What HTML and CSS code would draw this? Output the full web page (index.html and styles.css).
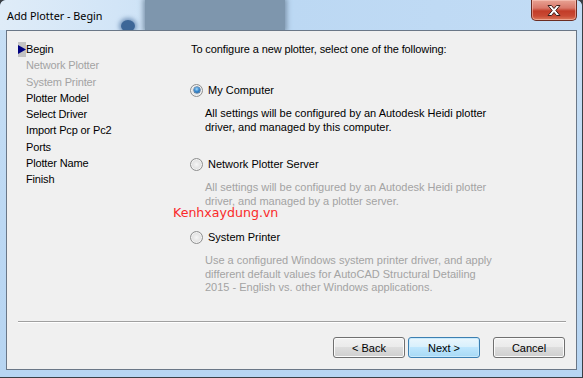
FILE: index.html
```html
<!DOCTYPE html>
<html>
<head>
<meta charset="utf-8">
<link rel="stylesheet" href="styles.css">
</head>
<body>
<div class="window">
  <div class="titlebar">
    <div class="glass-band"></div>
    <div class="glass-blob"></div>
    <span class="title">Add Plotter - Begin</span>
    <button class="close" aria-label="Close">
      <svg width="14" height="11" viewBox="0 0 14 11"><path d="M1 0.5h3.5L7 3.5 9.5 0.5H13L8.8 5.5 13 10.5H9.5L7 7.5 4.5 10.5H1L5.2 5.5Z" fill="#fff" stroke="#3b1f1a" stroke-width="1" stroke-linejoin="round"/></svg>
    </button>
  </div>
  <div class="client">
    <div class="body">
      <ul class="nav">
        <li class="current"><span class="marker"><svg width="8" height="9" viewBox="0 0 8 9"><path d="M0 0L8 4.5 0 9Z" fill="#000080"/></svg></span>Begin</li>
        <li class="disabled">Network Plotter</li>
        <li class="disabled">System Printer</li>
        <li>Plotter Model</li>
        <li>Select Driver</li>
        <li>Import Pcp or Pc2</li>
        <li>Ports</li>
        <li>Plotter Name</li>
        <li>Finish</li>
      </ul>
      <div class="main">
        <p class="intro">To configure a new plotter, select one of the following:</p>
        <div class="option opt1">
          <div class="radio-row"><span class="radio checked"></span><span>My Computer</span></div>
          <p class="desc">All settings will be configured by an Autodesk Heidi plotter<br>driver, and managed by this computer.</p>
        </div>
        <div class="option opt2">
          <div class="radio-row"><span class="radio"></span><span>Network Plotter Server</span></div>
          <p class="desc off">All settings will be configured by an Autodesk Heidi plotter<br>driver, and managed by a plotter server.</p>
        </div>
        <div class="option opt3">
          <div class="radio-row"><span class="radio"></span><span>System Printer</span></div>
          <p class="desc off">Use a configured Windows system printer driver, and apply<br>different default values for AutoCAD Structural Detailing<br>2015 - English vs. other Windows applications.</p>
        </div>
        <div class="watermark">Kenhxaydung.vn</div>
      </div>
    </div>
    <div class="separator"></div>
    <div class="buttons">
      <button class="btn">&lt; Back</button>
      <button class="btn default">Next &gt;</button>
      <button class="btn cancel">Cancel</button>
    </div>
  </div>
</div>
</body>
</html>
```

FILE: styles.css
```css
html, body {
  margin: 0;
  padding: 0;
}
body {
  width: 583px;
  height: 378px;
  background: #3a3f45;
  overflow: hidden;
  font-family: "Liberation Sans", Arial, sans-serif;
}
.window {
  width: 582px;
  height: 377px;
  box-sizing: border-box;
  padding: 0 5px 7px 6px;
  background: linear-gradient(to bottom, #c9e0f5, #bcd8f3 60%, #b7d5f2);
  border-radius: 6px 6px 0 0;
  display: flex;
  flex-direction: column;
  position: relative;
  overflow: hidden;
}
.titlebar {
  height: 30px;
  margin: 0 -5px 0 -6px;
  padding: 0 5px 0 7px;
  display: flex;
  align-items: flex-start;
  justify-content: space-between;
  background: linear-gradient(to right, #dfecf8 0%, #d2e5f7 20%, #bcd8f3 50%, #c2dcf5 100%);
  border-radius: 6px 6px 0 0;
  position: relative;
}
.glass-band {
  position: absolute;
  left: 145px;
  top: 0;
  width: 140px;
  height: 30px;
  background-color: #7e96ad;
  box-shadow: 0 0 5px 2px #7e96ad;
}
.glass-blob {
  position: absolute;
  left: 121px;
  top: 20px;
  width: 14px;
  height: 12px;
  border-radius: 50%;
  background-color: #3d6697;
  box-shadow: 0 0 4px 2px rgba(61,102,151,0.6);
}
.title {
  font-family: "Noto Sans", "Open Sans", sans-serif;
  font-size: 10.8px;
  color: #000;
  margin-top: 8px;
  position: relative;
  z-index: 1;
}
.close {
  width: 46px;
  height: 21px;
  margin: 0;
  padding: 0;
  border: 1px solid #6b2c22;
  border-top: none;
  border-radius: 0 0 5px 5px;
  background: linear-gradient(to bottom, #e8a394 0, #d9786a 40%, #c23c28 55%, #c94a34 80%, #dc7a5c 100%);
  box-shadow: inset 0 0 0 1px rgba(255,210,200,0.5);
  display: flex;
  align-items: center;
  justify-content: center;
  position: relative;
  z-index: 1;
}
.client {
  flex: 1;
  background: #f0f0f0;
  border: 1px solid #6a7787;
  display: flex;
  flex-direction: column;
  font-size: 11px;
  color: #000;
  position: relative;
  z-index: 2;
}
.body {
  display: flex;
  flex: 1;
  position: relative;
}
.nav {
  list-style: none;
  margin: 0;
  padding: 10px 0 0 19px;
  width: 164px;
  letter-spacing: -0.15px;
}
.nav li {
  height: 16.3px;
  line-height: 16.3px;
  position: relative;
}
.nav li.disabled {
  color: #a3a3a3;
}
.marker {
  position: absolute;
  left: -8px;
  top: 1px;
  width: 8px;
  height: 15px;
  background: #c3c3c3;
  display: flex;
  align-items: center;
}
.main {
  flex: 1;
  padding: 10px 0 0 0;
  position: relative;
}
.intro {
  margin: 0 0 0 1px;
  line-height: 16px;
  letter-spacing: -0.1px;
}
.radio-row {
  display: flex;
  align-items: center;
  height: 16px;
  gap: 5px;
}
.radio {
  width: 11px;
  height: 11px;
  border-radius: 50%;
  border: 1px solid #8e8f8f;
  background: radial-gradient(circle at 50% 50%, #f6f6f6 0, #e2e2e2 55%, #cfcfcf 100%);
  box-shadow: inset 0 0 0 1px #f4f4f4;
  display: flex;
  align-items: center;
  justify-content: center;
}
.radio.checked::after {
  content: "";
  width: 6px;
  height: 6px;
  border-radius: 50%;
  background: radial-gradient(circle at 45% 35%, #a8dcfb 0, #3a8ad0 45%, #124e8c 100%);
  box-shadow: 0 0 0 0.5px #1f4f80;
}
.opt1 { margin-top: 25px; }
.opt2 { margin-top: 22px; }
.opt3 { margin-top: 21px; }
.desc {
  margin: 9px 0 0 15px;
  line-height: 13.5px;
}
.desc.off {
  color: #a3a3a3;
}
.watermark {
  position: absolute;
  left: -17px;
  top: 174px;
  font-family: "DejaVu Sans", Verdana, sans-serif;
  font-size: 12.6px;
  color: #fa2a2a;
}
.separator {
  margin: 0 10px 0 11px;
  height: 1px;
  background: #a0a0a0;
  border-bottom: 1px solid #ffffff;
}
.buttons {
  display: flex;
  justify-content: flex-end;
  gap: 3px;
  padding: 14px 11px 11px 0;
}
.btn {
  width: 72px;
  height: 21px;
  padding: 0;
  font-family: "Liberation Sans", Arial, sans-serif;
  font-size: 11px;
  color: #000;
  border: 1px solid #707070;
  border-radius: 3px;
  background: linear-gradient(to bottom, #f2f2f2 0, #ebebeb 45%, #dddddd 50%, #cfcfcf 100%);
  box-shadow: inset 0 0 0 1px #fbfbfb;
}
.btn.default {
  border-color: #3c7fb1;
  background: linear-gradient(to bottom, #eaf6fd 0, #d9f0fc 45%, #bee6fd 50%, #a7d9f5 100%);
  box-shadow: inset 0 0 0 1px #c9eafc;
}
.btn.cancel {
  margin-left: 10px;
}
```
